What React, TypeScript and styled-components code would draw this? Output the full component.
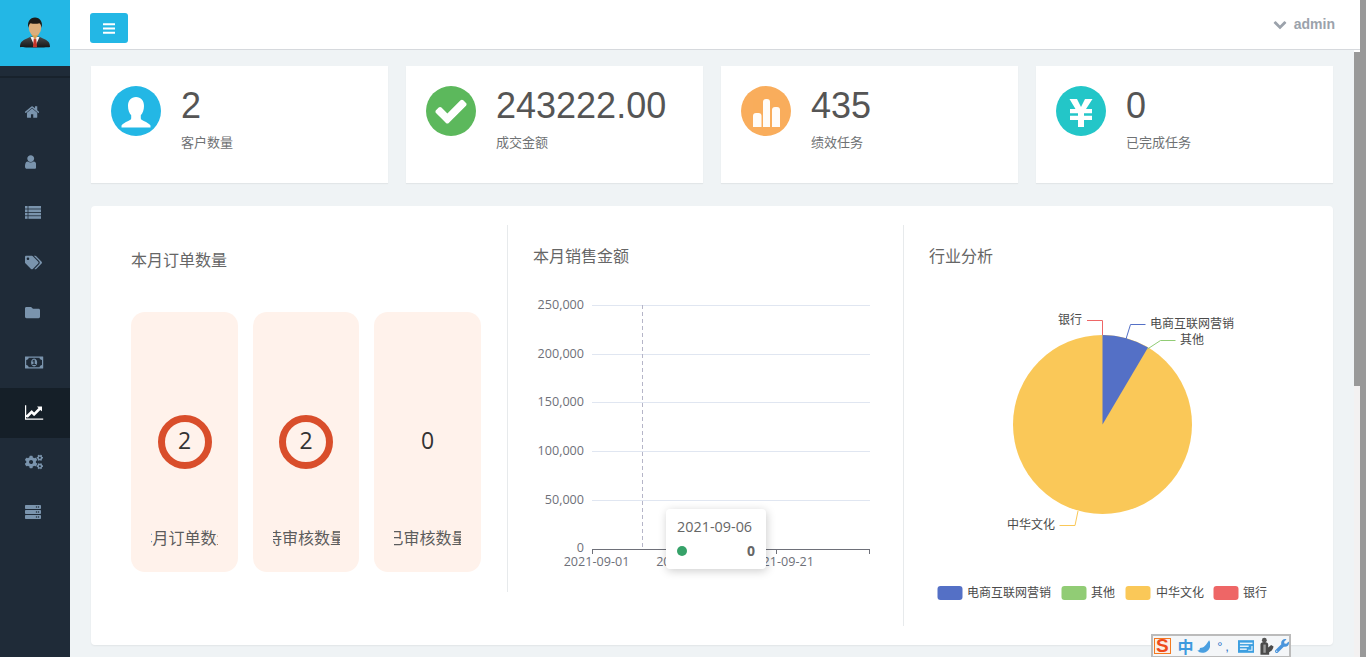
import React from "react";
import styled, { createGlobalStyle } from "styled-components";
import { FaTags, FaFolder, FaCogs, FaServer, FaWrench } from "react-icons/fa";

const SANS = `"Liberation Sans", "Noto Sans CJK SC", sans-serif`;
const ROUND = `"Open Sans", "Noto Sans CJK SC", sans-serif`;

const Global = createGlobalStyle`
  html, body { margin: 0; padding: 0; height: 100%; overflow: hidden; background: #eff3f5; }
  body { font-family: ${SANS}; color: #555; }
  * { box-sizing: border-box; }
`;

const Shell = styled.div`display: flex; width: 1366px; height: 657px; position: relative; overflow: hidden;`;
const Sidebar = styled.aside`width: 70px; flex: none; background: #1f2b38; display: flex; flex-direction: column;`;
const Logo = styled.div`height: 66px; background: #23b7e5; display: flex; align-items: center; justify-content: center;`;
const LogoRule = styled.div`height: 12px; border-bottom: 2px solid #18222c; margin-bottom: 10px;`;
const NavItem = styled.a<{ $active?: boolean }>`
  height: 50px; display: flex; align-items: center; padding: 0 0 2px 25px;
  color: ${p => (p.$active ? "#fff" : "#7a94ad")};
  background: ${p => (p.$active ? "#151f28" : "transparent")};
`;
const Content = styled.div`flex: 1; min-width: 0; display: flex; flex-direction: column;`;
const Header = styled.header`
  height: 50px; flex: none; background: #fff; border-bottom: 1px solid #d6d9dd;
  display: flex; align-items: center; justify-content: space-between; padding: 0 25px 0 20px;
`;
const MenuButton = styled.button`
  width: 38px; height: 30px; margin-top: 7px; border: 0; border-radius: 3px; background: #23b7e5; color: #fff; padding: 0;
  display: flex; align-items: center; justify-content: center;
`;
const UserMenu = styled.div`display: flex; align-items: center; gap: 7px; margin-bottom: 2px; font-size: 14px; font-weight: 700; color: #9ba2ab;`;
const Body = styled.div`flex: 1; min-height: 0; display: flex;`;
const Main = styled.main`flex: 1; min-width: 0; padding: 16px 21px 0; background: #eff3f5; overflow: hidden;`;
const InnerTrack = styled.div`width: 6px; flex: none; background: #f3f1f1; border-top: 2px solid #fff;`;
const InnerThumb = styled.div`height: 334px; background: #999;`;
const OuterBar = styled.div`width: 6px; flex: none; background: #999;`;

const StatRow = styled.section`display: grid; grid-template-columns: repeat(4, 297px); gap: 18px;`;
const StatCard = styled.div`
  height: 117px; background: #fff; padding: 20px; display: flex; align-items: flex-start; gap: 20px;
  box-shadow: 0 1px 1px rgba(0,0,0,.05);
`;
const StatIcon = styled.div<{ $bg: string }>`
  width: 50px; height: 50px; border-radius: 50%; background: ${p => p.$bg}; color: #fff; flex: none; overflow: hidden;
  display: flex; align-items: center; justify-content: center;
`;
const StatNumber = styled.div`font-size: 36px; line-height: 40px; color: #555;`;
const StatLabel = styled.div`font-size: 13px; line-height: 18px; margin-top: 8px; color: #6f7274;`;

const Panel = styled.section`
  margin-top: 23px; height: 439px; background: #fff; border-radius: 4px; padding-top: 19px;
  display: grid; grid-template-columns: 417px 396px 1fr; align-items: start;
  box-shadow: 0 1px 2px rgba(0,0,0,.06);
`;
const OrdersCol = styled.div`height: 367px; border-right: 1px solid #e7eaec; padding: 25px 26px 0 40px;`;
const ChartCol = styled.div<{ $divider?: boolean }>`
  height: 401px; position: relative; padding: 21px 0 0 25px;
  border-right: ${p => (p.$divider ? "1px solid #e7eaec" : "0")};
`;
const Title = styled.h3`margin: 0; font-size: 16px; line-height: 22px; font-weight: 400; color: #666;`;
const Tiles = styled.div`margin-top: 40px; display: grid; grid-template-columns: 107px 106px 107px; gap: 15px;`;
const Tile = styled.div`
  height: 260px; background: #fff2eb; border-radius: 14px; padding-top: 103px;
  display: flex; flex-direction: column; align-items: center;
`;
const Ring = styled.div<{ $on: boolean }>`
  width: 54px; height: 54px; border-radius: 50%; border: 7px solid ${p => (p.$on ? "#d94e2b" : "transparent")};
  display: flex; align-items: center; justify-content: center;
  font: 400 23px/1 ${ROUND}; color: #333; padding-bottom: 4px;
`;
const TileLabel = styled.div`
  margin-top: 58px; width: 67px; height: 24px; overflow: hidden; display: flex; justify-content: center;
  font-size: 16px; line-height: 24px; white-space: nowrap; color: #5c5c5c; flex: none;
`;
const ChartSvg = styled.svg`display: block; margin: 22px 0 0 -25px;`;
const AxisText = styled.text`font: 12.6px ${ROUND}; fill: #6e7079;`;
const PieText = styled.text`font: 12px ${SANS}; fill: #4a4a4a;`;
const Tooltip = styled.div`
  position: absolute; left: 158px; top: 284px; width: 100px; height: 60px; background: #fff; border-radius: 4px;
  box-shadow: 1px 2px 10px rgba(0,0,0,.2); padding: 8px 11px; font-family: ${ROUND}; color: #666;
`;
const TooltipDate = styled.div`font-size: 14.4px; line-height: 20px;`;
const TooltipRow = styled.div`display: flex; align-items: center; justify-content: space-between; margin-top: 4px; font-size: 14px; line-height: 20px; font-weight: 700;`;
const Dot = styled.span`width: 10px; height: 10px; border-radius: 50%; background: #36a269;`;

const ImeBar = styled.div`
  position: absolute; left: 1151px; top: 634px; width: 140px; height: 23px; background: #f4f6f8;
  border: 1px solid #bbb; border-top-width: 2px; border-left-width: 2px; border-right-width: 2px;
  display: flex; align-items: center; padding: 0 0 0 1px;
`;
const ImeS = styled.span`
  width: 17px; height: 16px; border: 1px solid #f47920; background: #fbeee6; color: #ef4a1c; font: 700 19px/14px ${SANS};
  display: flex; align-items: center; justify-content: center; margin-right: 7px;
`;
const ImeZh = styled.span`font: 700 16px/1 "Noto Sans CJK SC", sans-serif; color: #3d9ade; margin-right: 3px;`;
const ImePunct = styled.span`font: 400 13px/1 ${SANS}; color: #2a72c8; margin: 0 6px 0 7px; letter-spacing: 3px; width: 15px; white-space: nowrap;`;
const ImeGap = styled.span`width: 5px; flex: none;`;
const ImeWrench = styled.span`color: #4a95dc; display: flex; margin-left: 1px;`;

const Fa = ({ d, w = 1792, h = 1792, size = 16, minX = 0 }: { d: string; w?: number; h?: number; size?: number; minX?: number }) => (
  <svg width={(size * w) / h} height={size} viewBox={`${minX} 0 ${w} ${h}`} fill="currentColor"><path d={d} /></svg>
);
const HOME = "M1472 992v480q0 26-19 45t-45 19h-384v-384h-256v384h-384q-26 0-45-19t-19-45v-480q0-1 .5-3t.5-3l575-474 575 474q1 2 1 6zm223-69l-62 74q-8 9-21 11h-3q-13 0-21-7l-692-577-692 577q-12 8-24 7-13-2-21-11l-62-74q-8-10-7-23.500t11-21.500l719-599q32-26 76-26t76 26l244 204v-195q0-14 9-23t23-9h192q14 0 23 9t9 23v408l219 182q10 8 11 21.500t-7 23.500z";
const USER = "M1536 1399q0 109-62.500 187t-150.500 78h-854q-88 0-150.500-78t-62.500-187q0-85 8.500-160.500t31.500-152 58.500-131 94-89 134.500-34.500q131 128 313 128t313-128q76 0 134.500 34.500t94 89 58.500 131 31.500 152 8.500 160.500zm-256-887q0 159-112.500 271.500t-271.500 112.500-271.500-112.500-112.500-271.500 112.500-271.500 271.500-112.500 271.500 112.500 112.500 271.500z";
const CHECK = "M1671 566q0 40-28 68l-724 724-136 136q-28 28-68 28t-68-28l-136-136-362-362q-28-28-28-68t28-68l136-136q28-28 68-28t68 28l294 295 656-657q28-28 68-28t68 28l136 136q28 28 28 68z";
const BARS = "M1664 1344v128q0 26-19 45t-45 19h-1408q-26 0-45-19t-19-45v-128q0-26 19-45t45-19h1408q26 0 45 19t19 45zm0-512v128q0 26-19 45t-45 19h-1408q-26 0-45-19t-19-45v-128q0-26 19-45t45-19h1408q26 0 45 19t19 45zm0-512v128q0 26-19 45t-45 19h-1408q-26 0-45-19t-19-45v-128q0-26 19-45t45-19h1408q26 0 45 19t19 45z";
const CHEVRON = "M1683 808l-742 741q-19 19-45 19t-45-19l-742-741q-19-19-19-45.500t19-45.500l166-165q19-19 45-19t45 19l531 531 531-531q19-19 45-19t45 19l166 165q19 19 19 45.500t-19 45.500z";
const LINE_CHART = "M1920 1536v128h-1920v-1536h128v1408h1792zm-128-1248v435q0 21-19.500 29.500t-35.500-7.500l-121-121-633 633q-10 10-23 10t-23-10l-233-233-416 416-192-192 585-585q10-10 23-10t23 10l233 233 464-464-121-121q-16-16-7.500-35.500t29.500-19.500h435q14 0 23 9t9 23z";
const MONEY = "M768 1152h384v-96h-128v-448h-114l-148 137 77 80q42-37 55-57h2v288h-128v96zm512-256q0 70-21 142t-59.500 134-101.500 101-138 39-138-39-101.500-101-59.500-134-21-142 21-142 59.500-134 101.500-101 138-39 138 39 101.500 101 59.500 134 21 142zm512 256v-512q-106 0-181-75t-75-181h-1152q0 106-75 181t-181 75v512q106 0 181 75t75 181h1152q0-106 75-181t181-75zm128-832v1152q0 26-19 45t-45 19h-1792q-26 0-45-19t-19-45v-1152q0-26 19-45t45-19h1792q26 0 45 19t19 45z";

const ListGlyph = () => (
  <svg width="16" height="13" viewBox="0 0 16 13" fill="currentColor">
    {[0, 3.4, 6.8, 10.2].map(y => (
      <g key={y}><rect x="0" y={y} width="2.6" height="2.6" /><rect x="3.4" y={y} width="12.6" height="2.6" /></g>
    ))}
  </svg>
);

const Avatar = () => (
  <svg width="32" height="32" viewBox="0 0 32 32">
    <defs>
      <linearGradient id="suit" x1="0" y1="0" x2="0" y2="1">
        <stop offset="0" stopColor="#4a4c4e" />
        <stop offset="1" stopColor="#161718" />
      </linearGradient>
    </defs>
    <path d="M1 30c0-4.500 2-6.500 7-8.500l4-2h8l4 2c5 2 7 4 7 8.500-5 .8-25 .8-30 0z" fill="url(#suit)" />
    <path d="M11.500 20l4.500 10 4.500-10z" fill="#f4f4f4" />
    <path d="M14.800 21.500h2.400l.9 8.800h-4.200z" fill="#c7362a" />
    <path d="M12 17l4 5.500 4-5.500v-3h-8z" fill="#d6a050" />
    <ellipse cx="16" cy="10.500" rx="6.200" ry="8" fill="#dcae7c" />
    <path d="M9.300 11C8 5 11 .5 16 .5S24 5 22.700 11c-.5-2.500-1-4-2.200-4.800-3 .8-6 .8-9 0C10.300 7 9.800 8.500 9.300 11z" fill="#1d1a17" />
  </svg>
);

const CircleUser = () => (
  <svg width="50" height="50" viewBox="0 0 50 50" fill="#fff">
    <path d="M25 11c-5 0-8 3.500-8 9 0 4 1.200 7 3.200 9.300v3c0 1.200-1 1.800-3 2.800-3.200 1.500-5.500 2.800-6.700 4.500V41.500h29V39.600c-1.200-1.700-3.500-3-6.700-4.500-2-1-3-1.600-3-2.800v-3c2-2.300 3.200-5.300 3.200-9.300 0-5.500-3-9-8-9z" />
  </svg>
);
const CircleBars = () => (
  <svg width="50" height="50" viewBox="0 0 50 50" fill="#fff" opacity=".96">
    <path d="M12 30a3 3 0 0 1 3-3h2.500a3 3 0 0 1 3 3v11H12z" />
    <path d="M22 16a3 3 0 0 1 3-3h1a3 3 0 0 1 3 3v25h-7z" />
    <path d="M31 24a3 3 0 0 1 3-3h2a3 3 0 0 1 3 3v17h-8z" />
  </svg>
);
const CircleYen = () => (
  <svg width="50" height="50" viewBox="0 0 50 50" fill="#fff">
    <path d="M13.500 13h7.500l4 8 4-8h7.500l-6.500 10H36v4.200h-8v2.600h8V34h-8v7h-6v-7h-8v-4.200h8v-2.600h-8V23h5.500z" />
  </svg>
);

const Moon = () => (
  <svg width="14" height="13" viewBox="0 0 14 13"><path d="M12.500 0c1.800 3 1.800 7-.7 10-2.300 2.700-6.300 3.700-9.300 2.500L.3 10.500c2 .4 2.700-1 2.700-2.500 2 0 3.500-.5 5-2 1.800-1.800 3-4 4.500-6z" fill="#4a9fe0" /></svg>
);
const Keyboard = () => (
  <svg width="17" height="13" viewBox="0 0 17 13">
    <rect width="17" height="13" fill="#3d9fe0" />
    <g fill="#e8f4fc">
      <rect x="2" y="2.500" width="13" height="1.500" />
      <rect x="2" y="5.500" width="9" height="1.500" />
      <rect x="2" y="8.500" width="7" height="1.500" />
      <path d="M15 6v5H10.500V9.800H13.800V6z" />
    </g>
  </svg>
);
const Figure = () => (
  <svg width="15" height="18" viewBox="0 0 15 18">
    <circle cx="5.500" cy="3" r="2.500" fill="#555" />
    <path d="M1.500 7.500C1.500 6 3 5 5.500 5S9.500 6 9.500 7.500v3L12.500 8 15 9.500c-.5 3-2.500 5-4.500 6V18h-9z" fill="#4a4a4a" />
    <path d="M4.500 7.500H7V16H4.500z" fill="#9a9a9a" />
  </svg>
);

const yTicks: [number, string][] = [[305, "250,000"], [354, "200,000"], [402, "150,000"], [451, "100,000"], [500, "50,000"]];

const LineChart = () => (
  <ChartSvg width="396" height="330" viewBox="508 290 396 330">
    {yTicks.map(([y, t]) => (
      <g key={t}>
        <line x1="592" x2="870" y1={y + 0.5} y2={y + 0.5} stroke="#e0e6f1" />
        <AxisText x="584" y={y + 3.5} textAnchor="end">{t}</AxisText>
      </g>
    ))}
    <AxisText x="584" y="551.500" textAnchor="end">0</AxisText>
    <line x1="642.500" x2="642.500" y1="305" y2="549" stroke="#b5b5c8" strokeDasharray="4 3" />
    <line x1="592" x2="870" y1="549.500" y2="549.500" stroke="#6e7079" />
    {[592.5, 684.5, 776.5, 869.5].map(x => <line key={x} x1={x} x2={x} y1="549" y2="554" stroke="#6e7079" />)}
    {[[596.5, "2021-09-01"], [689, "2021-09-11"], [781, "2021-09-21"]].map(([x, t]) => (
      <AxisText key={t as string} x={x as number} y="566" textAnchor="middle">{t}</AxisText>
    ))}
  </ChartSvg>
);

const legend: [number, number, string, string][] = [
  [937.5, 967, "#5470c6", "电商互联网营销"],
  [1061.5, 1091, "#91cc75", "其他"],
  [1125.5, 1156, "#fac858", "中华文化"],
  [1213.5, 1243, "#ee6666", "银行"],
];

const PieChart = () => (
  <ChartSvg width="429" height="340" viewBox="904 290 429 340">
    <circle cx="1102.500" cy="424.500" r="89.500" fill="#fac858" />
    <path d="M1102.500 424.500V335A89.500 89.500 0 0 1 1148 347.600z" fill="#5470c6" />
    <polyline points="1102.500,335 1102.500,320.500 1087,320.500" fill="none" stroke="#ee6666" />
    <polyline points="1126,339 1130.500,324.500 1145.500,324.500" fill="none" stroke="#5470c6" />
    <polyline points="1147.500,349 1160.500,340.500 1175.500,340.500" fill="none" stroke="#91cc75" />
    <polyline points="1078,511 1075,525.500 1059.500,525.500" fill="none" stroke="#fac858" />
    <PieText x="1058" y="323.500">银行</PieText>
    <PieText x="1150" y="328">电商互联网营销</PieText>
    <PieText x="1180" y="344">其他</PieText>
    <PieText x="1007" y="529">中华文化</PieText>
    {legend.map(([rx, tx, c, t]) => (
      <g key={t}>
        <rect x={rx} y="586" width="25" height="14" rx="3" fill={c} />
        <PieText x={tx} y="596.500">{t}</PieText>
      </g>
    ))}
  </ChartSvg>
);

const stats = [
  { bg: "#23b7e5", icon: <CircleUser />, value: "2", label: "客户数量" },
  { bg: "#5cb85c", icon: <Fa d={CHECK} size={36} />, value: "243222.00", label: "成交金额" },
  { bg: "#f9ad5c", icon: <CircleBars />, value: "435", label: "绩效任务" },
  { bg: "#23c6c8", icon: <CircleYen />, value: "0", label: "已完成任务" },
];
const tiles = [
  { value: "2", label: "本月订单数量", ring: true },
  { value: "2", label: "待审核数量", ring: true },
  { value: "0", label: "已审核数量", ring: false },
];

export default function App() {
  return (
    <Shell>
      <Global />
      <Sidebar>
        <Logo><Avatar /></Logo>
        <LogoRule />
        <NavItem><Fa d={HOME} size={16} w={1600} minX={100} /></NavItem>
        <NavItem><Fa d={USER} size={16} w={1280} minX={256} /></NavItem>
        <NavItem><ListGlyph /></NavItem>
        <NavItem><FaTags size={17} /></NavItem>
        <NavItem><FaFolder size={15} /></NavItem>
        <NavItem><Fa d={MONEY} size={17} w={2048} /></NavItem>
        <NavItem $active><Fa d={LINE_CHART} size={17} w={2048} /></NavItem>
        <NavItem><FaCogs size={18} /></NavItem>
        <NavItem><FaServer size={16} /></NavItem>
      </Sidebar>
      <Content>
        <Header>
          <MenuButton aria-label="menu"><Fa d={BARS} size={15} w={1536} minX={128} /></MenuButton>
          <UserMenu><Fa d={CHEVRON} size={14} />admin</UserMenu>
        </Header>
        <Body>
          <Main>
            <StatRow>
              {stats.map(s => (
                <StatCard key={s.label}>
                  <StatIcon $bg={s.bg}>{s.icon}</StatIcon>
                  <div>
                    <StatNumber>{s.value}</StatNumber>
                    <StatLabel>{s.label}</StatLabel>
                  </div>
                </StatCard>
              ))}
            </StatRow>
            <Panel>
              <OrdersCol>
                <Title>本月订单数量</Title>
                <Tiles>
                  {tiles.map(t => (
                    <Tile key={t.label}>
                      <Ring $on={t.ring}>{t.value}</Ring>
                      <TileLabel>{t.label}</TileLabel>
                    </Tile>
                  ))}
                </Tiles>
              </OrdersCol>
              <ChartCol $divider>
                <Title>本月销售金额</Title>
                <LineChart />
                <Tooltip>
                  <TooltipDate>2021-09-06</TooltipDate>
                  <TooltipRow><Dot />0</TooltipRow>
                </Tooltip>
              </ChartCol>
              <ChartCol>
                <Title>行业分析</Title>
                <PieChart />
              </ChartCol>
            </Panel>
          </Main>
          <InnerTrack><InnerThumb /></InnerTrack>
        </Body>
      </Content>
      <OuterBar />
      <ImeBar>
        <ImeS>S</ImeS>
        <ImeZh>中</ImeZh>
        <Moon />
        <ImePunct>°,</ImePunct>
        <Keyboard />
        <ImeGap />
        <Figure />
        <ImeWrench><FaWrench size={14} /></ImeWrench>
      </ImeBar>
    </Shell>
  );
}
